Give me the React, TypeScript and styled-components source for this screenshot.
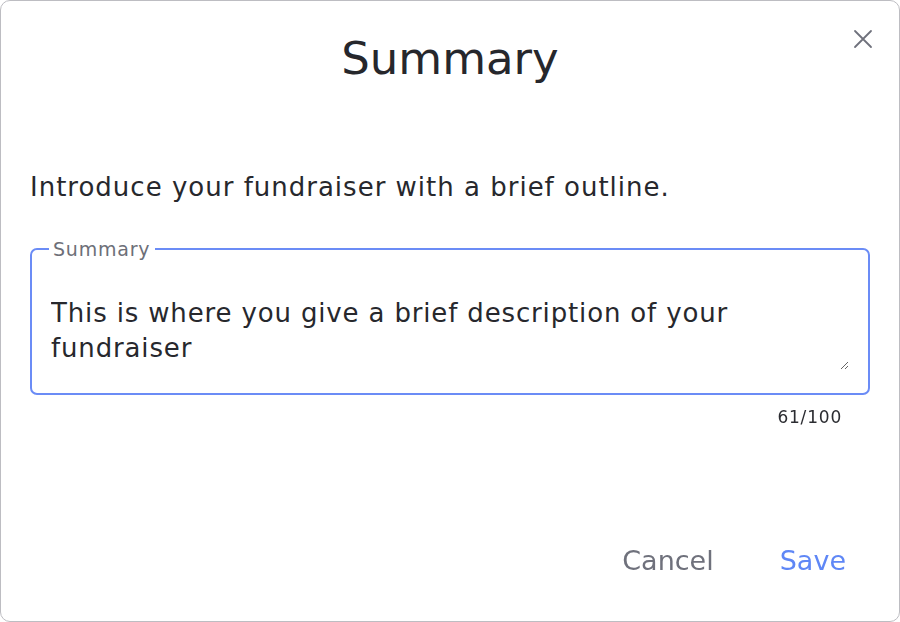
import {FC, useState, ChangeEvent, useEffect, useRef} from "react";
import styled, {createGlobalStyle} from "styled-components";

const FONT = `"DejaVu Sans", "Noto Sans", sans-serif`;

const GlobalStyle = createGlobalStyle`
  html, body {
    margin: 0;
    padding: 0;
    background: #ffffff;
  }
  body {
    font-family: ${FONT};
  }
`

const MAX = 100;

const App: FC = () => {
  const [summary, setSummary] = useState<string>('This is where you give a brief description of your fundraiser');
  const areaRef = useRef<HTMLTextAreaElement>(null);

  useEffect(() => {
    const el = areaRef.current;
    if (el) {
      el.focus();
      el.setSelectionRange(el.value.length, el.value.length);
    }
  }, []);

  const handleChange = (e: ChangeEvent<HTMLTextAreaElement>) => {
    setSummary(e.target.value.slice(0, MAX));
  }

  return <>
    <GlobalStyle/>
    <Dialog>
      <Header>
        <Title>Summary</Title>
        <CloseBtn aria-label="close">
          <svg width="20" height="20" viewBox="0 0 20 20" fill="none" stroke="currentColor" strokeWidth="1.8"
               strokeLinecap="round">
            <path d="M2 2L18 18M18 2L2 18"/>
          </svg>
        </CloseBtn>
      </Header>
      <Intro>Introduce your fundraiser with a brief outline.</Intro>
      <Field>
        <Legend>Summary</Legend>
        <TextArea ref={areaRef} value={summary} onChange={handleChange} rows={2}/>
      </Field>
      <Counter>{`${summary.length}/${MAX}`}</Counter>
      <Actions>
        <ActionBtn $primary={false}>Cancel</ActionBtn>
        <ActionBtn $primary={true}>Save</ActionBtn>
      </Actions>
    </Dialog>
  </>
}

const Dialog = styled.div`
  box-sizing: border-box;
  width: 900px;
  height: 622px;
  background: #ffffff;
  border: 1px solid #bdbdc2;
  border-radius: 10px;
  display: flex;
  flex-direction: column;
  padding: 0 29px 0 29px;
  color: #27282d;
`

const Header = styled.div`
  position: relative;
  display: flex;
  justify-content: center;
  padding-top: 28px;
  height: 110px;
  box-sizing: border-box;
`

const Title = styled.h1`
  margin: 0;
  font-size: 45px;
  font-weight: 400;
  line-height: 60px;
  color: #26272c;
`

const CloseBtn = styled.button`
  position: absolute;
  top: 28px;
  right: -3px;
  border: none;
  background: none;
  padding: 0;
  color: #6f717c;
  cursor: pointer;
  display: flex;
`

const Intro = styled.p`
  margin: 60px 0 0 0;
  font-size: 26px;
  letter-spacing: 1px;
  line-height: 32px;
  color: #27282d;
`

const Field = styled.fieldset`
  margin: 35px 0 0 0;
  padding: 4px 19px 10px 19px;
  border: 2px solid #6b8cf6;
  border-radius: 7px;
  height: 157px;
  box-sizing: border-box;
`

const Legend = styled.legend`
  padding: 0 5px 0 4px;
  margin-left: -2px;
  font-size: 19px;
  letter-spacing: 0.8px;
  color: #6d6f78;
`

const TextArea = styled.textarea`
  width: 100%;
  box-sizing: border-box;
  border: none;
  outline: none;
  resize: vertical;
  font-family: ${FONT};
  font-size: 26px;
  letter-spacing: 0.85px;
  line-height: 35px;
  color: #27282d;
  padding: 0;
  margin-top: 32px;
  height: 74px;
  caret-color: #6b8cf6;
`

const Counter = styled.div`
  align-self: flex-end;
  margin: 12px 28px 0 0;
  font-size: 17px;
  letter-spacing: 0.8px;
  color: #2b2c31;
`

const Actions = styled.div`
  margin-top: auto;
  display: flex;
  justify-content: flex-end;
  gap: 66px;
  padding: 0 24px 45px 0;
`

const ActionBtn = styled.button<{ $primary: boolean }>`
  border: none;
  background: none;
  padding: 0;
  font-family: ${FONT};
  font-size: 27px;
  color: ${p => p.$primary ? '#5f87f6' : '#6f717c'};
  cursor: pointer;
`

export default App;
